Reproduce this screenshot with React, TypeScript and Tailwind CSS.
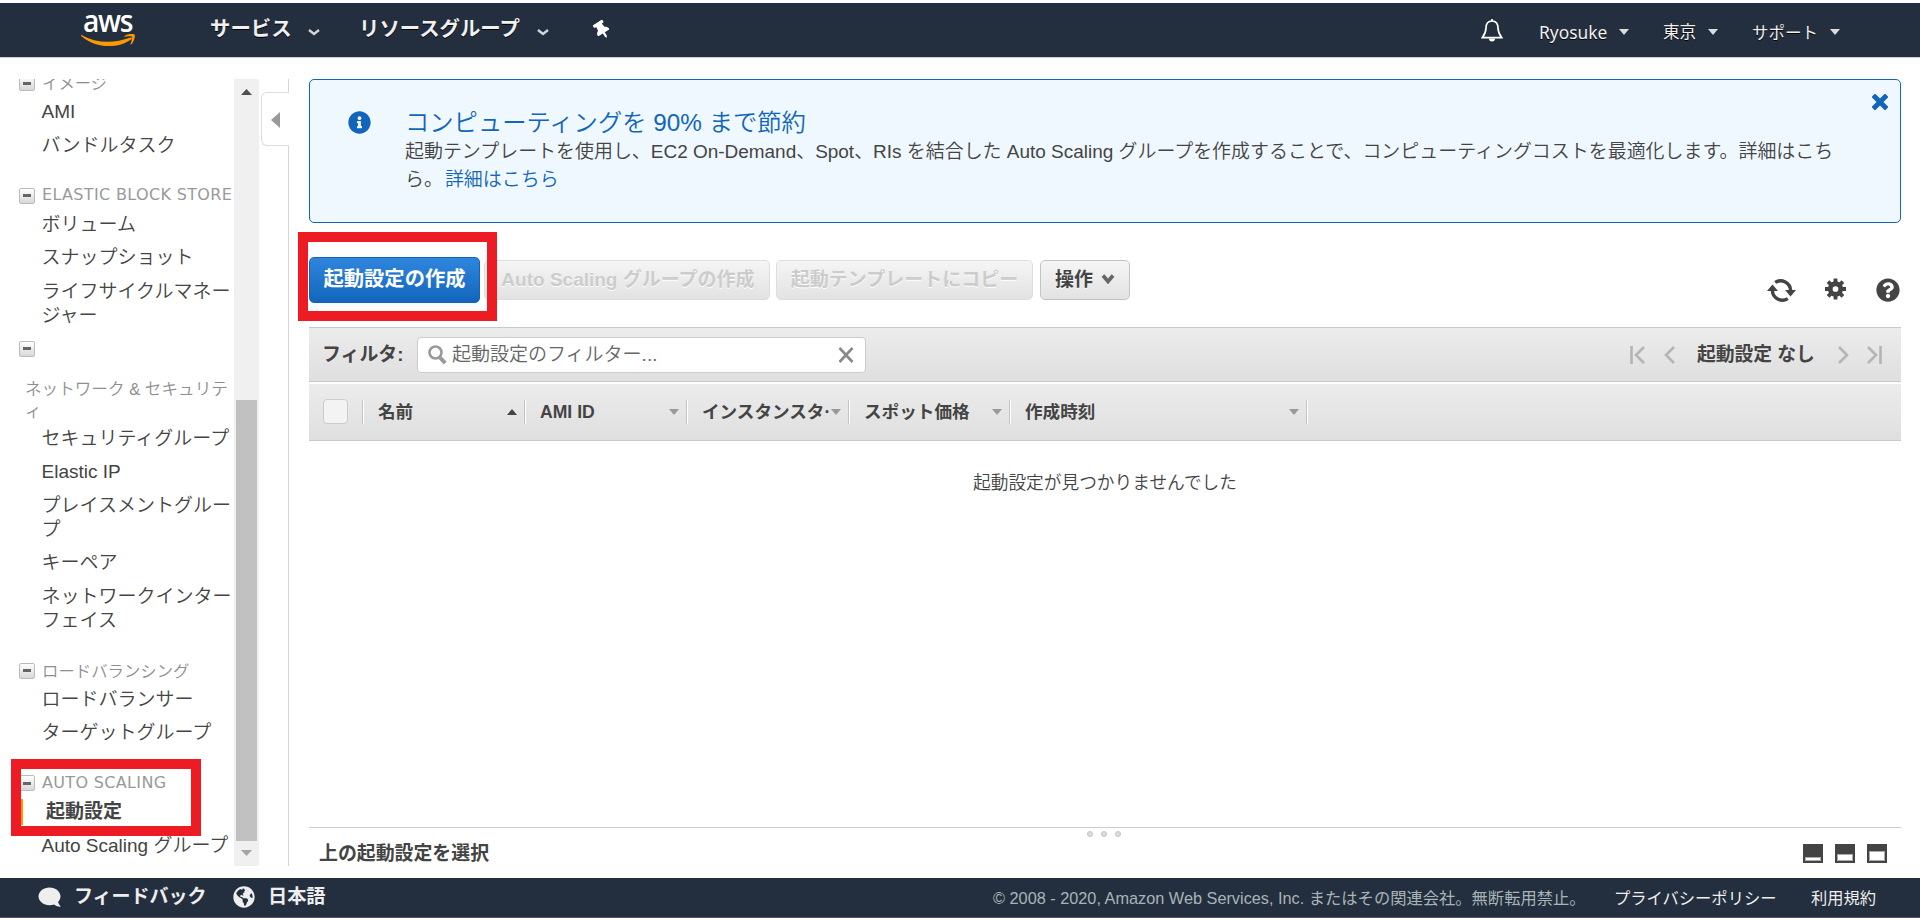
import type { ReactNode } from 'react';
import {
  FaComment,
  FaGlobeAmericas,
  FaInfoCircle,
  FaQuestionCircle,
  FaThumbtack,
} from 'react-icons/fa';

type NavItem = { lines: string[]; active?: boolean };
type NavSection = { title: string; latin?: boolean; stacked?: string[]; items: NavItem[] };

const SECTIONS: NavSection[] = [
  { title: 'イメージ', items: [{ lines: ['AMI'] }, { lines: ['バンドルタスク'] }] },
  {
    title: 'ELASTIC BLOCK STORE',
    latin: true,
    items: [
      { lines: ['ボリューム'] },
      { lines: ['スナップショット'] },
      { lines: ['ライフサイクルマネー', 'ジャー'] },
    ],
  },
  {
    title: '',
    stacked: ['ネットワーク & セキュリテ', 'ィ'],
    items: [
      { lines: ['セキュリティグループ'] },
      { lines: ['Elastic IP'] },
      { lines: ['プレイスメントグルー', 'プ'] },
      { lines: ['キーペア'] },
      { lines: ['ネットワークインター', 'フェイス'] },
    ],
  },
  { title: 'ロードバランシング', items: [{ lines: ['ロードバランサー'] }, { lines: ['ターゲットグループ'] }] },
  {
    title: 'AUTO SCALING',
    latin: true,
    items: [{ lines: ['起動設定'], active: true }, { lines: ['Auto Scaling グループ'] }],
  },
];

function Chevron({ className }: { className?: string }) {
  return (
    <svg width="12" height="7" viewBox="0 0 12 7" className={className}>
      <path d="M1 1 L6 5 L11 1" fill="none" stroke="#d5d5d5" strokeWidth="2.4" />
    </svg>
  );
}

function Caret({ className }: { className?: string }) {
  return (
    <svg width="10" height="6" viewBox="0 0 10 6" className={className}>
      <path d="M0 0 H10 L5 6 Z" fill="#dcdcdc" />
    </svg>
  );
}

function AwsLogo() {
  return (
    <div className="ml-[81px] mt-[11px] w-[54px] h-[33px] relative [text-shadow:none]">
      <span className="absolute left-[2px] -top-[8px] origin-left scale-x-[0.94] font-['Open_Sans','Noto_Sans',sans-serif] font-semibold text-[30px] leading-[30px] tracking-[-1.4px] text-white">
        aws
      </span>
      <svg width="54" height="13" viewBox="0 0 54 13" className="absolute left-0 top-5">
        <path d="M0.4 0.9 C15 9.2 32 10 49.5 3.6 C50.8 3 51.6 4.2 50.4 5.2 C37 15 15 14.8 0.2 2 C-0.2 1.4 0 0.7 0.4 0.9Z" fill="#ff9900" />
        <path d="M43.5 2 C47 -0.6 53 -0.3 53.7 0.7 C54.5 2 53 8 50.2 10.4 C49.7 10.8 49.3 10.5 49.5 10 C50.4 7.8 51.6 4 51 2.8 C50.3 2 46.5 2.4 44 2.7 C43.3 2.8 43 2.4 43.5 2Z" fill="#ff9900" />
      </svg>
    </div>
  );
}

function Header() {
  return (
    <header className="h-[58px] shrink-0 border-t-[3px] border-b border-t-white border-b-[#d0d0d0] bg-[#232f3e] bg-clip-padding flex items-start text-[#f0f0f0] [text-shadow:0_1px_0_#000]">
      <AwsLogo />
      <span className="ml-[75px] mt-[14px] w-[82px] text-[20.4px] leading-6 font-bold whitespace-nowrap">サービス</span>
      <Chevron className="ml-[16px] mt-[26px]" />
      <span className="ml-[39px] mt-[14px] w-[163px] text-[20.4px] leading-6 font-bold whitespace-nowrap">リソースグループ</span>
      <Chevron className="ml-[15px] mt-[26px]" />
      <FaThumbtack className="ml-[44px] mt-[18px] w-[18px] h-[18px] -rotate-[32deg] text-white" />
      <svg width="22" height="24" viewBox="0 0 22 24" className="ml-auto mt-[16px]" fill="none" stroke="#fff" strokeWidth="1.7">
        <path d="M11 2 C6.8 2 5 5.2 5 9 C5 13.5 3.6 15.6 1.4 18.6 H20.6 C18.4 15.6 17 13.5 17 9 C17 5.2 15.2 2 11 2Z" />
        <path d="M11 0 V2" />
        <path d="M8 19.5 a3 3 0 0 0 6 0Z" fill="#fff" stroke="none" />
      </svg>
      <span className="ml-[36px] mt-[17px] w-[68px] text-[17.4px] leading-6 font-['Noto_Sans',sans-serif]">Ryosuke</span>
      <Caret className="ml-[12px] mt-[26px]" />
      <span className="ml-[34px] mt-[18px] w-[34px] text-[16.6px] leading-6">東京</span>
      <Caret className="ml-[11px] mt-[26px]" />
      <span className="ml-[34px] mt-[18px] w-[66px] text-[16.5px] leading-6 whitespace-nowrap">サポート</span>
      <Caret className="ml-[12px] mr-[80px] mt-[26px]" />
    </header>
  );
}

function Toggle() {
  return (
    <span className="w-4 h-4 shrink-0 rounded-[2px] border border-[#bbb] bg-linear-to-b from-white to-[#d8d8d8] flex items-center justify-center">
      <span className="w-2 h-[3px] bg-[#666]" />
    </span>
  );
}

function Section({ section, first }: { section: NavSection; first: boolean }) {
  const gap = first ? 'mt-0' : section.stacked ? 'mt-[4.5px]' : 'mt-[21.5px]';
  return (
    <div className={gap}>
      <div className="h-6 flex items-center pl-[19px]">
        <Toggle />
        <span
          className={
            section.latin
              ? "ml-[7px] -mt-px whitespace-nowrap text-[16px] leading-6 tracking-[0.34px] text-[#999] font-['DejaVu_Sans',sans-serif]"
              : 'ml-[7px] whitespace-nowrap text-[16.4px] leading-6 text-[#8e8e8e] font-[350]'
          }
        >
          {section.title}
        </span>
      </div>
      {section.stacked && (
        <div className="mt-[17px] pt-px -mb-px pl-[25px] text-[16.6px] leading-[22px] text-[#8e8e8e] font-[350] whitespace-nowrap">
          {section.stacked.map((line) => <div key={line}>{line}</div>)}
        </div>
      )}
      {section.items.map((item) => (
        <div
          key={item.lines[0]}
          className={
            item.active
              ? 'pl-[46px] pt-[5.25px] pb-[4.25px] text-[19px] leading-6 font-bold text-[#444] whitespace-nowrap'
              : 'pl-[41.5px] pt-[5.25px] pb-[4.25px] text-[19px] leading-6 font-[350] text-[#444] whitespace-nowrap'
          }
        >
          {item.lines.map((line) => <div key={line}>{line}</div>)}
        </div>
      ))}
    </div>
  );
}

function Sidebar() {
  return (
    <div className="w-[289px] mt-[21px] h-[787px] shrink-0 flex relative">
      <nav className="w-[234px] overflow-hidden">
        <div className="-mt-2">
          {SECTIONS.map((s, i) => <Section key={s.items[0].lines[0]} section={s} first={i === 0} />)}
        </div>
      </nav>
      <div className="w-[25px] bg-[#f0f0f0] flex flex-col items-center">
        <svg width="11" height="6" viewBox="0 0 11 6" className="mt-[10px]">
          <path d="M5.5 0 L11 6 H0Z" fill="#505050" />
        </svg>
        <div className="mt-[305px] w-[21px] h-[441px] bg-[#c1c1c1]" />
        <svg width="11" height="6" viewBox="0 0 11 6" className="mt-[9px]">
          <path d="M5.5 6 L11 0 H0Z" fill="#a3a3a3" />
        </svg>
      </div>
      <div className="flex-1 border-r border-[#d5d5d5]" />
      <div className="absolute left-[261px] top-[13px] w-7 h-[54px] border border-r-0 border-[#ddd] rounded-l-md bg-white" />
      <div className="absolute left-[288px] top-[14px] w-px h-[52px] bg-white" />
      <svg width="9" height="16" viewBox="0 0 9 16" className="absolute left-[271px] top-[33px]">
        <path d="M9 0 V16 L0 8Z" fill="#999" />
      </svg>
      <div className="absolute left-[21px] top-[720px] w-[2px] h-[26px] bg-[#ff9900]" />
      <div className="absolute left-[11px] top-[680px] w-[190px] h-[77px] border-[10px] border-[#ed1c24]" />
    </div>
  );
}

function InfoBanner() {
  return (
    <div className="h-[144px] border border-[#1166bb] rounded-[5px] bg-[#f0f8ff] flex items-start">
      <FaInfoCircle className="ml-[38px] mt-[31px] w-[23px] h-[23px] text-[#1166bb]" />
      <div className="ml-[34px] mt-[28px] flex-1 whitespace-nowrap font-[350]">
        <div className="text-[24.3px] leading-[30px] text-[#1166bb]">コンピューティングを 90% まで節約</div>
        <div className="text-[18.97px] leading-[28px] text-[#444]">
          起動テンプレートを使用し、EC2 On-Demand、Spot、RIs を結合した Auto Scaling グループを作成することで、コンピューティングコストを最適化します。詳細はこち
          <br />
          ら。<span className="ml-[2px] text-[#1166bb]">詳細はこちら</span>
        </div>
      </div>
      <svg width="16" height="16" viewBox="0 0 16 16" className="mt-[14px] mr-[12px]">
        <path d="M3 3 L13 13 M13 3 L3 13" stroke="#1166bb" strokeWidth="5" strokeLinecap="square" strokeLinejoin="round" />
      </svg>
    </div>
  );
}

function GrayButton({ children, className }: { children: ReactNode; className: string }) {
  return (
    <button
      type="button"
      className={`h-10 shrink-0 rounded-[5px] border bg-linear-to-b from-[#f5f5f5] to-[#e2e2e2] flex items-center justify-center text-[19px] font-bold whitespace-nowrap [text-shadow:0_1px_0_#fff] ${className}`}
    >
      {children}
    </button>
  );
}

function RefreshIcon() {
  return (
    <svg width="29" height="25" viewBox="0 0 29 25" fill="none" stroke="#444" strokeWidth="3.4">
      <path d="M8.2 4.4 A10 10 0 0 1 23.6 12.5" />
      <path d="M20.8 20.6 A10 10 0 0 1 5.4 12.5" />
      <path d="M18 12 H29 L23.5 18.5Z" fill="#444" stroke="none" />
      <path d="M0 13 H11 L5.5 6.5Z" fill="#444" stroke="none" />
    </svg>
  );
}

function GearIcon() {
  return (
    <svg width="21" height="22" viewBox="0 0 22 22" fill="#444">
      <circle cx="11" cy="11" r="5.5" fill="none" stroke="#444" strokeWidth="5" />
      {[0, 45, 90, 135].map((deg) => (
        <path key={deg} d="M9 0 H13 V4.5 H9Z M9 17.5 H13 V22 H9Z" transform={`rotate(${deg} 11 11)`} />
      ))}
    </svg>
  );
}

function Toolbar() {
  return (
    <div className="relative mt-[34px] h-[46px] flex items-start">
      <button
        type="button"
        className="w-[171px] h-[46px] rounded-[5px] border border-[#1166bb] bg-linear-to-b from-[#2f86dd] to-[#1166bb] text-white text-[20.3px] font-bold whitespace-nowrap pb-[2px]"
      >
        起動設定の作成
      </button>
      <div className="ml-1 mt-[3px] flex">
        <GrayButton className="w-[286px] pl-[2px] border-[#ddd] text-[#ccc]">Auto Scaling グループの作成</GrayButton>
        <GrayButton className="ml-[6px] w-[257px] border-[#ddd] text-[#ccc]">起動テンプレートにコピー</GrayButton>
        <GrayButton className="ml-[7px] w-[90px] border-[#c4c4c4] text-[#444]">
          操作
          <svg width="14" height="10" viewBox="0 0 14 10" className="ml-2 -mt-[2px]">
            <path d="M2 1.5 L7 7.5 L12 1.5" fill="none" stroke="#666" strokeWidth="3.6" />
          </svg>
        </GrayButton>
      </div>
      <div className="ml-auto mr-px mt-[21px] flex items-start">
        <RefreshIcon />
        <div className="ml-[29px]"><GearIcon /></div>
        <FaQuestionCircle className="ml-[30px] w-6 h-6 text-[#444]" />
      </div>
      <div className="absolute -left-[11px] -top-[25px] w-[199px] h-[89px] border-[10px] border-[#ed1c24]" />
    </div>
  );
}

function PagerIcon({ d, width, className }: { d: string; width: number; className: string }) {
  return (
    <svg width={width} height="18" viewBox={`0 0 ${width} 18`} fill="none" stroke="#b5b5b5" strokeWidth="2.6" className={className}>
      <path d={d} />
    </svg>
  );
}

function FilterBar() {
  return (
    <div className="mt-6 h-[55px] border-y border-[#c8c8c8] bg-linear-to-b from-[#ececec] to-[#dfdfdf] flex items-center text-[#444]">
      <span className="ml-[13px] mt-px w-[95px] text-[18.9px] font-bold whitespace-nowrap">フィルタ:</span>
      <div className="w-[449px] h-9 rounded-[4px] border border-[#ccc] bg-white flex items-center">
        <svg width="19" height="20" viewBox="0 0 19 20" className="ml-[10px]" fill="none" stroke="#999">
          <circle cx="7.5" cy="7.5" r="6" strokeWidth="2.6" />
          <path d="M12 12.5 L17.2 18.2" strokeWidth="4" />
        </svg>
        <span className="ml-[5px] text-[19px] leading-6 font-[350] text-[#666]">起動設定のフィルター...</span>
        <svg width="16" height="16" viewBox="0 0 16 16" className="ml-auto mr-[11px]">
          <path d="M1.5 1 L14.5 15 M14.5 1 L1.5 15" stroke="#888" strokeWidth="2.6" />
        </svg>
      </div>
      <PagerIcon width={15} d="M1.5 0 V18 M14 1 L6 9 L14 17" className="ml-auto" />
      <PagerIcon width={11} d="M10 1 L2 9 L10 17" className="ml-[19px]" />
      <span className="ml-[22px] mt-px w-[119px] text-[18.8px] font-bold whitespace-nowrap">起動設定 なし</span>
      <PagerIcon width={11} d="M1 1 L9 9 L1 17" className="ml-[22px]" />
      <PagerIcon width={15} d="M13.5 0 V18 M1 1 L9 9 L1 17" className="ml-[18px] mr-[19px]" />
    </div>
  );
}

const COLUMNS = [
  { label: '名前', width: 'w-[162px]', sorted: true },
  { label: 'AMI ID', width: 'w-[162px]' },
  { label: 'インスタンスタ·', width: 'w-[162px]' },
  { label: 'スポット価格', width: 'w-[161px]' },
  { label: '作成時刻', width: 'w-[297px]' },
];

function TableHead() {
  return (
    <div className="mt-[2px] h-[57px] border-b border-[#c8c8c8] bg-linear-to-b from-[#ececec] to-[#dfdfdf] flex items-center text-[17.6px] leading-6 font-bold text-[#444]">
      <span className="ml-[14px] mr-[14px] -mt-px w-[25px] h-[25px] rounded-[4px] border border-[#ccc] bg-[#f3f3f3]" />
      <span className="w-[2px] h-6 border-l border-[#c4c4c4] bg-white" />
      {COLUMNS.map((col) => (
        <div key={col.label} className={`${col.width} h-6 flex items-center border-r border-white`}>
          <span className="ml-[14px] flex-1 w-0 overflow-hidden whitespace-nowrap">{col.label}</span>
          <svg width="10" height="6" viewBox="0 0 10 6" className="mr-[7px]">
            {col.sorted ? <path d="M0 6 H10 L5 0Z" fill="#444" /> : <path d="M0 0 H10 L5 6Z" fill="#999" />}
          </svg>
          <span className="w-px h-6 bg-[#c4c4c4]" />
        </div>
      ))}
    </div>
  );
}

function LayoutIcon({ inner }: { inner: string }) {
  return (
    <span className="w-5 h-[19px] bg-[#444] flex items-end p-[2px]">
      <span className={`w-full bg-white border border-[#aaa] ${inner}`} />
    </span>
  );
}

function Footer() {
  return (
    <footer className="h-10 shrink-0 bg-[#232f3e] border-b border-[#5b5560] flex items-center pb-[2px] text-[#eee] whitespace-nowrap">
      <FaComment className="ml-[38px] w-[23px] h-[22px] -scale-x-100" />
      <span className="ml-[13px] mt-px w-[132px] text-[19px] leading-6 font-bold">フィードバック</span>
      <FaGlobeAmericas className="ml-[27px] w-[22px] h-[22px]" />
      <span className="ml-[13px] mt-px text-[19.2px] leading-6 font-bold">日本語</span>
      <span className="ml-auto mt-[2px] w-[584px] text-[16.3px] leading-6 text-[#a9b4b8]">
        © 2008 - 2020, Amazon Web Services, Inc. またはその関連会社。無断転用禁止。
      </span>
      <span className="ml-[37px] mt-[2px] w-[162px] text-[16.3px] leading-6">プライバシーポリシー</span>
      <span className="ml-[35px] mt-[2px] mr-[44px] w-[65px] text-[16.3px] leading-6">利用規約</span>
    </footer>
  );
}

export default function App() {
  return (
    <div className="w-[1920px] h-[918px] overflow-hidden bg-white flex flex-col font-['Liberation_Sans','Noto_Sans_CJK_JP',sans-serif]">
      <Header />
      <div className="flex h-[820px] shrink-0">
        <Sidebar />
        <main className="ml-5 mr-[19px] mt-[21px] flex-1 min-w-0 flex flex-col">
          <InfoBanner />
          <Toolbar />
          <FilterBar />
          <TableHead />
          <p className="mt-[30px] text-[17.7px] leading-6 font-[350] text-[#444] text-center">
            起動設定が見つかりませんでした
          </p>
          <div className="mt-auto h-[51px] border-t border-[#ccc]">
            <div className="h-[10px] pt-[3px] pr-[2px] flex justify-center gap-[8px]">
              {[0, 1, 2].map((n) => (
                <span key={n} className="w-[6px] h-[6px] rounded-full border-[1.5px] border-[#c4c4c4] bg-[#ddd]" />
              ))}
            </div>
            <div className="flex items-start justify-between">
              <span className="ml-[10px] mt-[4px] text-[18.9px] leading-6 font-bold text-[#444]">上の起動設定を選択</span>
              <div className="mt-[6px] mr-[14px] flex gap-3">
                <LayoutIcon inner="h-[4px]" />
                <LayoutIcon inner="h-[7px]" />
                <LayoutIcon inner="h-[10px]" />
              </div>
            </div>
          </div>
        </main>
      </div>
      <Footer />
    </div>
  );
}
